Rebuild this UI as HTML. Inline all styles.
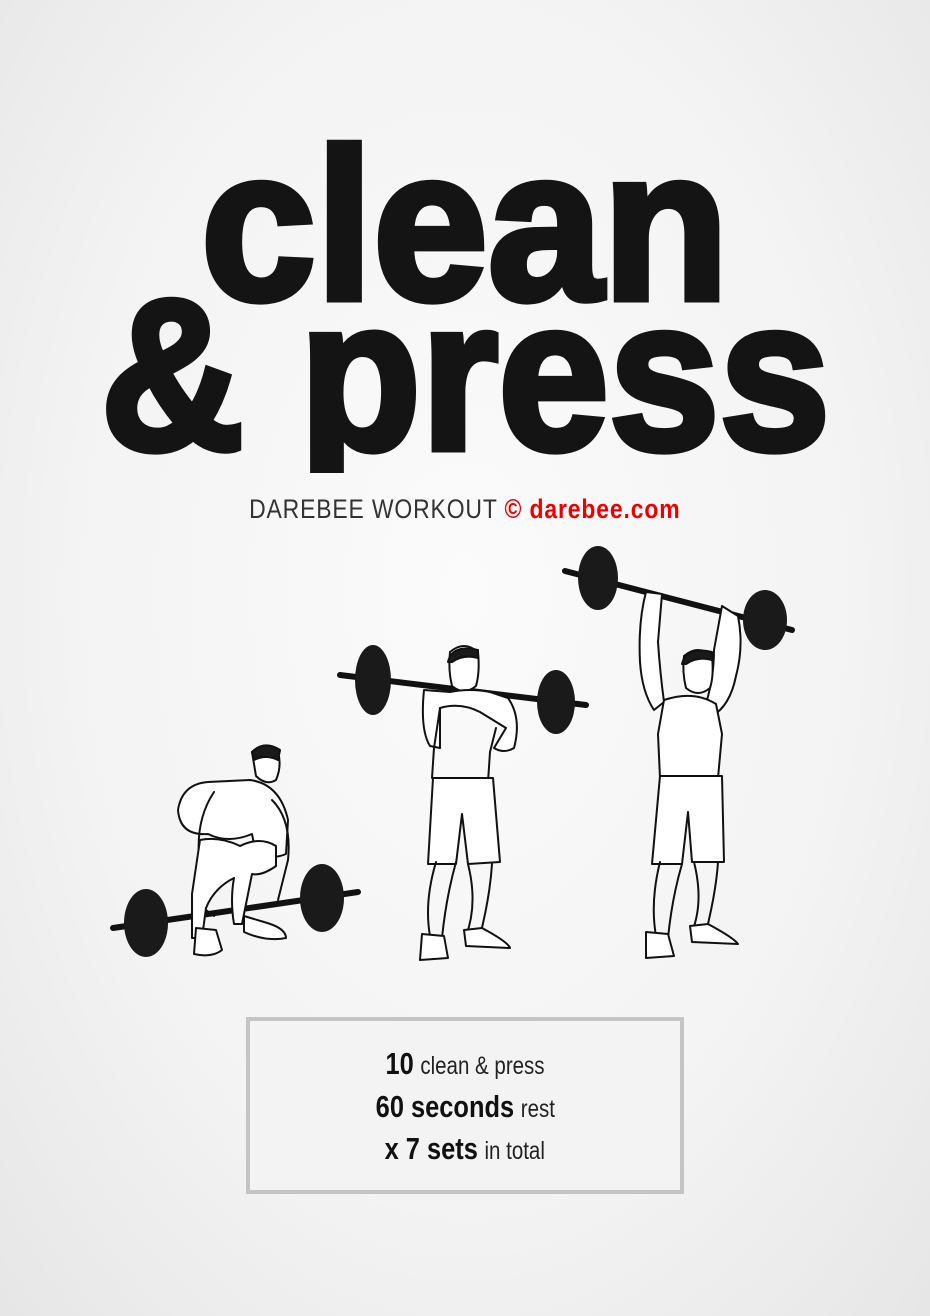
<!DOCTYPE html>
<html><head><meta charset="utf-8"><style>
html,body{margin:0;padding:0}
body{width:930px;height:1316px;position:relative;overflow:hidden;background:radial-gradient(ellipse at 50% 45%,#fbfbfb 0%,#f3f3f3 60%,#e6e6e6 100%);font-family:"Liberation Sans",sans-serif}
.t{position:absolute;left:0;width:930px;text-align:center;font-weight:bold;font-size:215px;line-height:215px;color:#141414;-webkit-text-stroke:7px #141414;white-space:nowrap;overflow:hidden}
.t span{display:inline-block}
.sub{position:absolute;top:494px;left:0;width:930px;text-align:center;white-space:nowrap}
.sub span{display:inline-block;transform:scaleX(.85);font-size:27px;color:#333;letter-spacing:1px}
.sub b{color:#ee0000;font-weight:bold}
.box{position:absolute;left:246px;top:1017px;width:430px;height:169px;border:4px solid #c4c4c4;background:#f3f3f3}
.l{position:absolute;left:0;width:430px;text-align:center;white-space:nowrap;color:#111}
.l span{display:inline-block;transform:scaleX(.82);font-size:29px}
.l b{font-size:31px}
.l i{font-style:normal;font-size:25px;color:#222}
</style></head><body>
<div class="t" style="top:117px;height:200px"><span style="transform:scaleX(.96)">clean</span></div>
<div class="t" style="top:267px;height:206px"><span style="transform:scaleX(.925)">&amp; press</span></div>
<div class="sub"><span>DAREBEE WORKOUT <b>© darebee.com</b></span></div>

<svg width="930" height="1316" style="position:absolute;left:0;top:0" fill="none" stroke="#111" stroke-width="2" stroke-linejoin="round" stroke-linecap="round">
<!-- figure 1 -->
<line x1="113" y1="928" x2="358" y2="892" stroke-width="6"/>
<ellipse cx="146" cy="923" rx="22" ry="34" fill="#1a1a1a" stroke="none"/>
<ellipse cx="322" cy="898" rx="22" ry="34" fill="#1a1a1a" stroke="none"/>
<path d="M252 752 q12 -10 26 0 q4 14 -2 28 q-10 6 -20 -4 z" fill="#fff"/>
<path d="M252 752 q12 -12 28 -2 l-2 10 q-12 -6 -24 0 z" fill="#1a1a1a"/>
<path d="M250 780 q30 4 38 40 l-2 34 q-14 6 -30 0 l-4 -20 q-24 10 -44 0 q-28 2 -30 -24 q4 -26 30 -28 z" fill="#fff"/>
<path d="M214 792 q-20 30 -14 74 l6 44 l8 6 M272 800 q20 20 16 60 l-10 40"/>
<path d="M200 840 q20 -4 40 6 q20 -10 36 0 l0 20 q-14 10 -24 8 l-10 50 l-8 0 q-4 -24 0 -46 q-20 10 -28 30 l-4 30 l-10 0 l0 -44 z" fill="#fff"/>
<path d="M196 928 l20 2 l6 20 q-10 8 -28 4 z M244 916 l20 6 q22 6 22 16 q-20 4 -42 -6 z" fill="#fff"/>
<!-- figure 2 -->
<line x1="340" y1="675" x2="586" y2="705" stroke-width="6"/>
<ellipse cx="373" cy="680" rx="18" ry="35" fill="#1a1a1a" stroke="none"/>
<ellipse cx="556" cy="702" rx="19" ry="32" fill="#1a1a1a" stroke="none"/>
<path d="M450 652 q14 -12 28 0 q2 20 -2 34 q-12 10 -24 0 q-4 -16 -2 -34 z" fill="#fff"/>
<path d="M448 662 q4 -18 30 -12 l0 8 q-14 -4 -26 4 z" fill="#1a1a1a"/>
<path d="M424 690 q-4 40 6 56 l10 2 l0 -40 q20 -6 40 4 l26 16 l-12 20 q10 6 20 0 q8 -30 -6 -50 l-18 -6 q-20 -4 -40 0 z" fill="#fff"/>
<path d="M440 708 l-6 40 l-2 30 l56 4 l2 -30 l6 -24"/>
<path d="M433 778 l60 0 l7 84 l-32 2 l-6 -50 l-6 50 l-28 0 z" fill="#fff"/>
<path d="M436 862 q-12 40 -6 74 l12 2 q4 -40 14 -76 M468 864 q10 40 -2 72 l14 0 q10 -40 12 -72"/>
<path d="M422 934 l22 2 l4 22 l-28 2 z M464 930 l18 -2 q26 14 28 20 l-44 -2 z" fill="#fff"/>
<!-- figure 3 -->
<line x1="565" y1="571" x2="792" y2="630" stroke-width="6"/>
<ellipse cx="598" cy="578" rx="20" ry="32" fill="#1a1a1a" stroke="none"/>
<ellipse cx="765" cy="620" rx="22" ry="30" fill="#1a1a1a" stroke="none"/>
<path d="M646 592 q-8 30 -6 70 q2 30 14 48 l10 -8 q-4 -30 -6 -60 l4 -48 z M722 606 l16 10 q6 30 -2 60 q-6 30 -24 40 l-8 -6 q10 -30 10 -60 z" fill="#fff"/>
<path d="M684 656 q14 -12 28 0 q2 20 -2 32 q-12 10 -24 0 q-4 -16 -2 -32 z" fill="#fff"/>
<path d="M682 664 q4 -18 30 -12 l0 8 q-14 -4 -26 4 z" fill="#1a1a1a"/>
<path d="M664 700 q30 -10 52 4 l6 30 l-4 44 l-58 0 l-2 -44 z" fill="#fff"/>
<path d="M660 776 l62 0 l2 86 l-32 0 l-4 -50 l-6 52 l-30 0 z" fill="#fff"/>
<path d="M660 862 q-10 40 -4 74 l12 2 q4 -40 14 -74 M694 862 q10 40 -2 70 l14 0 q10 -40 12 -70"/>
<path d="M646 932 l22 2 l6 22 l-28 2 z M690 926 l18 -2 q26 14 30 20 l-46 -2 z" fill="#fff"/>
</svg>

<div class="box">
<div class="l" style="top:25px"><span><b>10</b> <i>clean &amp; press</i></span></div>
<div class="l" style="top:68px"><span><b>60 seconds</b> <i>rest</i></span></div>
<div class="l" style="top:110px"><span><b>x 7 sets</b> <i>in total</i></span></div>
</div>
</body></html>
